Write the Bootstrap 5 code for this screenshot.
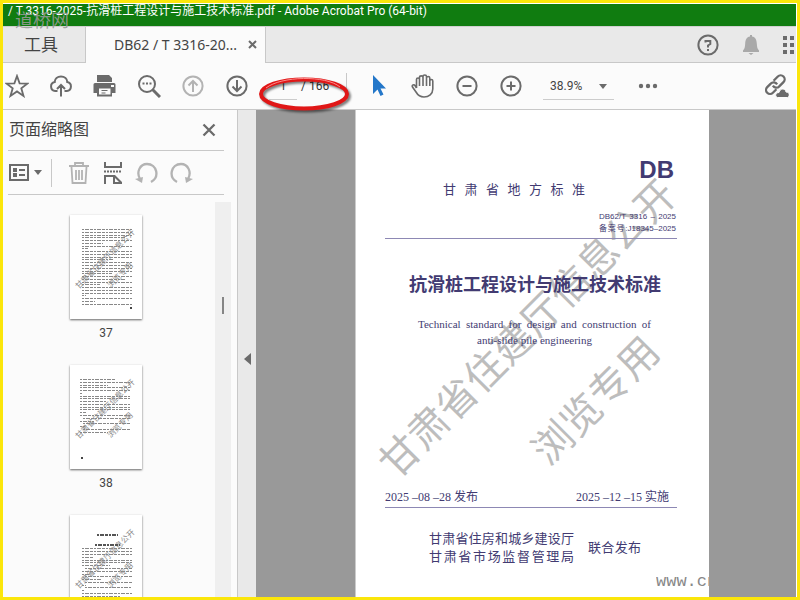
<!DOCTYPE html>
<html lang="zh-CN">
<head>
<meta charset="utf-8">
<meta name="viewport" content="width=device-width, initial-scale=1">
<title>Adobe Acrobat Pro</title>
<link rel="stylesheet" href="https://cdn.jsdelivr.net/npm/bootstrap@5.3.0/dist/css/bootstrap.min.css">
<style>
  :root { --ink: #423b72; --icon: #6b6b6b; --line: #c8c8c8; --chrome: #e9e9e9; --panel: #fbfbfb; }
  body { font-family: Roboto, "Noto Sans CJK SC", sans-serif; font-size: 12px; line-height: 16px; color: #444; background: #fbe60b; }
  .window { height: 100vh; padding: 3px; }
  .app { background: var(--panel); border-top: 1px solid #fff; border-right: 1px solid #fff; }
  .titlebar { height: 22px; padding: 0 13px 0 5px; background: #107c10; color: #fff; line-height: 15px; }
  .minimize { width: 10px; height: 1px; margin-top: 6px; background: #fff; }
  .site-mark { left: 12px; top: 7px; font-size: 18px; line-height: 20px; color: rgba(150, 155, 150, .9); pointer-events: none; }
  .tabs { height: 37px; background: var(--chrome); border-top: 1px solid #d0d0d0; border-bottom: 1px solid var(--line); padding-right: 2px; }
  .tabs .tool-tab { width: 83px; padding-right: 6px; border-right: 1px solid var(--line); color: #444; font-size: 17px; }
  .doc-tab { width: 180px; height: 36px; background: var(--panel); border-right: 1px solid var(--line); padding: 0 8px 0 28px; font-family: "Noto Sans", sans-serif; font-size: 14px; color: #444; }
  .plain { border: 0; padding: 0; background: transparent; color: var(--icon); line-height: 0; flex: none; }
  .faded { color: #b3b3b3; }
  svg { display: block; fill: none; stroke: currentColor; stroke-width: 2; }
  .toolbar { height: 47px; gap: 20px; padding: 0 7px 0 2px; border-bottom: 1px solid var(--line); }
  .page-box { width: 78px; }
  .page-box input { width: 28px; height: 27px; border: 0; border-bottom: 1px solid #ccc; background: transparent; text-align: center; font-size: 12px; color: #444; padding: 0; }
  .page-box label { color: #333; margin-left: 4px; white-space: nowrap; }
  .page-box .divider { height: 26px; margin-left: auto; }
  .divider { width: 1px; background: var(--line); }
  .ring { left: -15px; top: -10px; color: #e01717; filter: drop-shadow(2px 2px 1px rgba(0,0,0,.5)); pointer-events: none; }
  .zoom-box { width: 71px; }
  .zoom-box select { width: 100%; height: 27px; border: 0; border-bottom: 1px solid #ccc; background: transparent; appearance: none; padding: 0 7px; font-size: 12px; color: #444; }
  .caret { border: 4px solid transparent; border-top: 5px solid var(--icon); border-bottom: 0; }
  .zoom-box .caret { right: 7px; top: 11px; pointer-events: none; }
  .side { width: 235px; border-right: 1px solid var(--line); padding-left: 5px; }
  .side-head { height: 41px; margin-right: 13px; border-bottom: 1px solid var(--line); padding-right: 8px; }
  .side-head h2 { font-size: 16px; line-height: 20px; font-weight: 400; color: #444; margin: 0 0 0 1px; }
  .side-tools { height: 44px; margin-right: 13px; border-bottom: 1px solid var(--line); }
  .side-tools .group { margin-left: 15px; gap: 10px; }
  .side-tools .divider { height: 28px; margin-left: 9px; }
  .thumbs { padding: 20px 0 0 62px; gap: 24px; }
  .thumb { width: 72px; gap: 6px; }
  .thumb a { background: #fff; box-shadow: 0 1px 2px rgba(0,0,0,.6); color: #888; }
  .thumb svg { stroke-width: 1; stroke-dasharray: 2 1 4 1 3 1; }
  .thumb text, .stamp text { fill: #bdbdbd; stroke: none; font-family: "Noto Sans CJK SC", sans-serif; text-anchor: middle; }
  .thumb text { font-size: 8px; fill: #888; }
  .track { width: 16px; margin: 7px 6px 0 auto; background: #efefef; padding: 95px 0 0 7px; }
  .track div { width: 2px; height: 17px; background: #858585; }
  .splitter { width: 18px; background: var(--chrome); padding: 10px 0 0 0; }
  .canvas-area { background: #999; padding-right: 87px; }
  .sheet { width: 354px; background: #fff; color: var(--ink); border-left: 1px solid #ccc; padding: 48px 32px 0 29px; overflow: hidden; }
  .stamp { left: 0; top: 0; }
  .stamp text { font-size: 40px; }
  .sheet > .copy { position: relative; }
  .spread { text-align: justify; text-align-last: justify; white-space: nowrap; }
  .db { font: bold 24px/24px "Liberation Sans", sans-serif; padding-right: 3px; text-align: right; }
  .kind { width: 142px; margin-left: 58px; font-size: 13px; line-height: 16px; }
  .codes { width: 77px; margin: 13px 1px 3px auto; font: 8px/12px "Liberation Sans", "Noto Sans CJK SC", sans-serif; }
  .rule { height: 1px; background: #8d88b4; }
  .sheet h1 { font-size: 18px; line-height: 24px; font-weight: 700; margin: 34px 0 0; padding-left: 8px; text-align: center; white-space: nowrap; }
  .english { width: 233px; margin: 19px 0 0 33px; font: 11px/16px "Liberation Serif", serif; text-align: center; }
  .dates { margin-top: 141px; padding-right: 7px; font: 12px/16px "Liberation Serif", "Noto Sans CJK SC", serif; height: 18px; }
  .dates span { width: 94px; white-space: nowrap; }
  .issuer { margin: 22px 0 0 44px; gap: 14px; font-size: 13px; line-height: 18px; }
  .issuer .names { width: 145px; }
  .issuer .joint { width: 53px; }
  .web { margin: 6px -32px 0 271px; font: 17px/20px "Liberation Mono", monospace; color: #888; white-space: nowrap; overflow: hidden; }
</style>
<script src="https://cdn.jsdelivr.net/npm/bootstrap@5.3.0/dist/js/bootstrap.bundle.min.js"></script>
</head>
<body>
<div class="window">
<div class="app h-100 d-flex flex-column position-relative overflow-hidden">
  <header class="titlebar d-flex justify-content-between flex-shrink-0">
    <span class="text-nowrap">/ T 3316-2025-抗滑桩工程设计与施工技术标准.pdf - Adobe Acrobat Pro (64-bit)</span>
    <button class="plain minimize" aria-label="Minimize"></button>
  </header>
  <div class="site-mark position-absolute">道桥网</div>

  <nav class="tabs d-flex align-items-center flex-shrink-0">
    <button class="plain tool-tab h-100">工具</button>
    <div class="doc-tab d-flex align-items-center justify-content-between">
      <span class="text-nowrap">DB62 / T 3316-20...</span>
      <button class="plain" aria-label="Close tab"><svg width="9" height="9" viewBox="0 0 9 9"><path d="M1 1l7 7M8 1L1 8"/></svg></button>
    </div>
    <div class="d-flex align-items-center ms-auto gap-4">
      <button class="plain" aria-label="Help"><svg width="22" height="22" viewBox="0 0 22 22"><circle cx="11" cy="11" r="9.6"/><path d="M8.500 8.500V7h4.800v3L11 11.500v2M11 15v2"/></svg></button>
      <button class="plain faded" aria-label="Notifications"><svg width="16" height="20" viewBox="0 0 16 20"><path fill="#a9a9a9" stroke="none" d="M7 0h2v1.500c3.500.5 4.500 3 4.800 7 .2 4 .7 5.500 2.200 7V17H0v-1.500c1.500-1.500 2-3 2.200-7 .3-4 1.300-6.500 4.800-7zM5.500 18h5L8 20z"/></svg></button>
      <button class="plain" aria-label="Apps"><svg width="11" height="18" viewBox="0 0 11 18"><path stroke="none" fill="currentColor" d="M0 0h4v4H0zM7 0h4v4H7zM0 7h4v4H0zM7 7h4v4H7zM0 14h4v4H0zM7 14h4v4H7z"/></svg></button>
    </div>
  </nav>

  <div class="toolbar d-flex align-items-center flex-shrink-0">
    <button class="plain" aria-label="Star"><svg width="24" height="24" viewBox="0 0 24 24"><path stroke-width="1.800" d="M12 2l2.600 7.300 8 .2-6.300 4.800 2.200 7.600-6.500-4.500-6.500 4.500 2.200-7.600L1.400 9.500l8-.2z"/></svg></button>
    <button class="plain" aria-label="Upload"><svg width="24" height="24" viewBox="0 0 24 24"><path d="M8.500 17H6.200a4.500 4.500 0 0 1-.5-8.900C5.800 4.800 8.500 2.500 12 2.500s6.200 2.300 6.300 5.600a4.500 4.500 0 0 1-.5 8.900h-2.300M12 22.500V11M8 15l4-4 4 4"/></svg></button>
    <button class="plain" aria-label="Print"><svg width="24" height="24" viewBox="0 0 24 24"><path fill="currentColor" stroke="none" fill-rule="evenodd" d="M4 1h12l3 3v4H4zM2 9h19a1.500 1.500 0 0 1 1.500 1.500V19H19v3.500H4V19H.5v-8.500A1.500 1.500 0 0 1 2 9zM18 11v2h3v-2z"/><path fill="#fbfbfb" stroke="none" d="M6 14.500h11.500v6H6z"/><path d="M8.500 16.500h6M8.500 19h4" stroke-width="1"/></svg></button>
    <button class="plain" aria-label="Find"><svg width="24" height="24" viewBox="0 0 24 24"><circle cx="10" cy="10" r="8"/><path d="M15.500 15.500L23 23" stroke-width="3"/><path d="M5.500 9.500h2m1.500 0h2m1.500 0h2"/></svg></button>
    <button class="plain faded" aria-label="Previous page"><svg width="24" height="24" viewBox="0 0 24 24"><circle cx="12" cy="12" r="9.600"/><path d="M12 18V7M7.500 11.500L12 7l4.500 4.500"/></svg></button>
    <button class="plain" aria-label="Next page"><svg width="24" height="24" viewBox="0 0 24 24"><circle cx="12" cy="12" r="9.600"/><path d="M12 6v11M7.500 12.500L12 17l4.500-4.500"/></svg></button>
    <div class="page-box d-flex align-items-center position-relative">
      <input id="page" value="1"><label for="page">/ 166</label><span class="divider"></span>
      <svg class="ring position-absolute" width="100" height="50" viewBox="0 0 100 50"><ellipse cx="50" cy="31" rx="43" ry="14.500" stroke-width="4"/><path d="M12 25c15-12 60-13 74-1" stroke="#ff8a8a" stroke-width="1"/></svg>
    </div>
    <button class="plain" aria-label="Select"><svg width="24" height="24" viewBox="0 0 24 24"><path fill="#2477c9" stroke="none" d="M6 1v19l4.500-4.500 3 6.500 3-1.500-3-6H19z"/></svg></button>
    <button class="plain" aria-label="Hand"><svg width="24" height="24" viewBox="0 0 24 24"><path stroke-width="1.600" d="M5.500 14V5.500c0-2 3-2 3 0V12V3.500c0-2.200 3.500-2.200 3.500 0V12V2.500c0-2 3.500-2 3.500 0V12V4c0-2 3.300-2 3.300 0v8V7c0-2 3-2 3 0v8c0 5-4 8-8.800 8-4 0-6-1.500-8-5L1.500 13c-1-2 1.500-3 2.500-1.500L5.500 14"/></svg></button>
    <button class="plain" aria-label="Zoom out"><svg width="24" height="24" viewBox="0 0 24 24"><circle cx="12" cy="12" r="9.600"/><path d="M7.500 12h9"/></svg></button>
    <button class="plain" aria-label="Zoom in"><svg width="24" height="24" viewBox="0 0 24 24"><circle cx="12" cy="12" r="9.600"/><path d="M7.500 12h9M12 7.500v9"/></svg></button>
    <div class="zoom-box position-relative flex-shrink-0">
      <select aria-label="Zoom level"><option>38.9%</option></select><span class="caret position-absolute"></span>
    </div>
    <button class="plain" aria-label="More"><svg width="24" height="24" viewBox="0 0 24 24"><g transform="translate(2 0)" fill="currentColor" stroke="none"><circle cx="5" cy="12" r="2.200"/><circle cx="12" cy="12" r="2.200"/><circle cx="19" cy="12" r="2.200"/></g></svg></button>
    <button class="plain ms-auto" aria-label="Share link"><svg width="24" height="24" viewBox="0 0 24 24"><g transform="rotate(-45 10 11)" stroke-width="2.300"><path d="M8 15H3a4 4 0 0 1 0-8h5a4 4 0 0 1 4 5"/><path d="M12 7h6a4 4 0 0 1 0 8h-6a4 4 0 0 1-4-5"/></g><path stroke="#fbfbfb" stroke-width="1" fill="currentColor" d="M12.500 23.500c-3-1-2-5 1.500-5 1-4.500 6.500-4.500 7-.5 4 0 4 4.500 1.500 5.500z"/></svg></button>
  </div>

  <main class="d-flex flex-grow-1 overflow-hidden">
    <aside class="side d-flex flex-column flex-shrink-0">
      <div class="side-head d-flex align-items-center justify-content-between flex-shrink-0">
        <h2>页面缩略图</h2>
        <button class="plain" aria-label="Close panel"><svg width="14" height="14" viewBox="0 0 14 14"><path stroke-width="2.300" d="M1.500 1.500l11 11M12.500 1.500l-11 11"/></svg></button>
      </div>
      <div class="side-tools d-flex align-items-center flex-shrink-0">
        <button class="plain d-flex align-items-center" aria-label="Options"><svg width="22" height="20" viewBox="0 0 22 20"><path d="M2 2h18v15H2zM11 7h6M11 12h6"/><path stroke="none" fill="currentColor" d="M5 5h4v4H5zM5 10h4v4H5z"/></svg><span class="caret ms-1"></span></button>
        <span class="divider"></span>
        <div class="group d-flex">
          <button class="plain faded" aria-label="Delete"><svg width="24" height="24" viewBox="0 0 24 24"><path d="M2 5h20M8 4V2h8v2M4.500 6l1 16h13l1-16M9 9v10M12 9v10M15 9v10" stroke-width="1.800"/></svg></button>
          <button class="plain" aria-label="Split"><svg width="24" height="24" viewBox="0 0 24 24"><path d="M4 1v5h16V1M4 23v-8h9"/><path fill="currentColor" stroke="none" fill-rule="evenodd" d="M12 14h2l7 7v2h-9zM14 17v4h4z"/><path stroke-dasharray="2 1" d="M3 10.500h18"/></svg></button>
          <button class="plain faded" aria-label="Rotate left"><svg width="24" height="24" viewBox="0 0 24 24"><path stroke-width="2.300" d="M5 18C1 11 5 3 12 3c10 0 13 13 4 18"/><path d="M0 18l8-2-1 6z" fill="currentColor" stroke="none"/></svg></button>
          <button class="plain faded" aria-label="Rotate right"><svg width="24" height="24" viewBox="0 0 24 24"><path stroke-width="2.300" d="M19 18C23 11 19 3 12 3 2 3-1 16 8 21"/><path d="M24 18l-8-2 1 6z" fill="currentColor" stroke="none"/></svg></button>
        </div>
      </div>
      <div class="d-flex flex-grow-1 overflow-hidden">
        <div class="thumbs d-flex flex-column">
          <div class="thumb d-flex flex-column text-center flex-shrink-0">
            <a href="#p37" aria-label="37"><svg width="72" height="104" viewBox="0 0 72 104"><text transform="translate(37 46) rotate(-45)">甘肃省住建厅信息公开</text><text transform="translate(52 62) rotate(-45)">浏览专用</text><path d="M12 14.500h51M12 17.500h51M12 20.500h51M12 22.500h43M12 25.500h51M12 28.500h21M12 31.500h51M12 33.500h6M12 36.500h51M12 39.500h51M12 42.500h51M12 44.500h32M12 47.500h51M12 50.500h51M12 53.500h51M12 56.500h51M12 58.500h30M12 61.500h51M12 64.500h43M12 67.500h51M12 69.500h18M12 72.500h51M12 75.500h51M12 78.500h51M12 80.500h4M12 83.500h51M12 86.500h13M12 89.500h51"/><path stroke="#444" stroke-width="2" stroke-dasharray="none" d="M60 93h2"/></svg></a>
            <span>37</span>
          </div>
          <div class="thumb d-flex flex-column text-center flex-shrink-0">
            <a href="#p38" aria-label="38"><svg width="72" height="104" viewBox="0 0 72 104"><text transform="translate(37 46) rotate(-45)">甘肃省住建厅信息公开</text><text transform="translate(52 62) rotate(-45)">浏览专用</text><path d="M10 14.500h35M10 17.500h51M10 20.500h28M10 22.500h51M10 25.500h51M10 28.500h3M10 31.500h51M10 33.500h51M10 36.500h26M10 39.500h51M10 42.500h51M10 44.500h51M10 47.500h6M10 50.500h50M13 53.500h48M10 56.500h15M13 58.500h48M10 61.500h5M13 64.500h48M10 67.500h28"/><path stroke="#444" stroke-width="2" stroke-dasharray="none" d="M11 93h2"/></svg></a>
            <span>38</span>
          </div>
          <div class="thumb d-flex flex-column text-center flex-shrink-0">
            <a href="#p39" aria-label="39"><svg width="72" height="104" viewBox="0 0 72 104"><text transform="translate(37 46) rotate(-45)">甘肃省住建厅信息公开</text><text transform="translate(52 62) rotate(-45)">浏览专用</text><path stroke="#555" stroke-width="2" d="M27 20h21M25 30h25"/><path d="M12 33.500h51M12 36.500h51M12 39.500h51M12 42.500h11M12 45.500h51M12 47.500h51M12 50.500h28M15 53.500h48M12 56.500h51M12 59.500h8M15 61.500h48M12 64.500h20M15 67.500h48M12 70.500h4M15 72.500h46M12 75.500h3M12 78.500h51M12 81.500h38"/></svg></a>
          </div>
        </div>
        <div class="track"><div></div></div>
      </div>
    </aside>
    <div class="splitter d-flex align-items-center justify-content-center flex-shrink-0">
      <button class="plain" aria-label="Collapse panel"><svg width="7" height="12" viewBox="0 0 7 12"><path fill="currentColor" stroke="none" d="M7 0v12L0 6z"/></svg></button>
    </div>
    <section class="canvas-area d-flex justify-content-end flex-grow-1">
      <article class="sheet position-relative flex-shrink-0">
        <svg class="stamp position-absolute" width="354" height="488" viewBox="0 0 354 488"><text transform="translate(171 218) rotate(-45)" y="15">甘肃省住建厅信息公开</text><text transform="translate(239 290) rotate(-45)" y="15">浏览专用</text></svg>
        <div class="copy">
          <div class="db">DB</div>
          <div class="kind spread">甘 肃 省 地 方 标 准</div>
          <div class="codes"><div class="spread">DB62/T 3316 – 2025</div><div class="spread">备案号:J18345–2025</div></div>
          <div class="rule"></div>
          <h1>抗滑桩工程设计与施工技术标准</h1>
          <div class="english"><div class="spread">Technical standard for design and construction of</div><div>anti-slide pile engineering</div></div>
          <div class="dates d-flex justify-content-between"><span>2025 –08 –28 发布</span><span>2025 –12 –15 实施</span></div>
          <div class="rule"></div>
          <div class="issuer d-flex align-items-center"><div class="names"><div class="spread">甘肃省住房和城乡建设厅</div><div class="spread">甘肃省市场监督管理局</div></div><div class="joint spread">联合发布</div></div>
          <div class="web">www.cn</div>
        </div>
      </article>
    </section>
  </main>
</div>
</div>
</body>
</html>
